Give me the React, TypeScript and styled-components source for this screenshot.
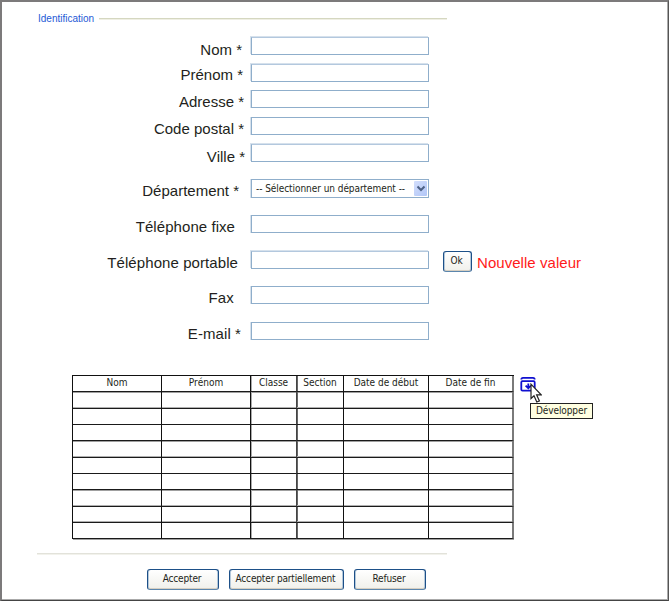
import React from "react";
import styled, { createGlobalStyle } from "styled-components";

const Global = createGlobalStyle`
  * { box-sizing: border-box; }
  body { margin: 0; background: #fff; }
`;

const small = `font-family: "DejaVu Sans Condensed", "DejaVu Sans", Tahoma, sans-serif; font-stretch: condensed;`;

const Page = styled.main`
  width: 669px;
  height: 601px;
  overflow: hidden;
  background: #fff;
  border-style: solid;
  border-width: 2px 1px 1px 2px;
  border-color: #7c7a7b #555 #444 #7c7a7b;
  box-shadow: inset -1px -1px 0 #aaa;
  padding-top: 10px;
  color: #231f20;
  font-family: "Liberation Sans", Arial, sans-serif;
  font-kerning: none;
`;

const Legend = styled.header`
  display: flex;
  align-items: center;
  width: 409px;
  height: 14px;
  margin-left: 36px;
  gap: 5px;
  color: #2459d6;
  font-size: 10px;
  line-height: 14px;
  white-space: nowrap;
  &::after {
    content: "";
    flex: 1;
    height: 2px;
    background: linear-gradient(#d5d7c0 50%, #efefe4 50%);
  }
`;

const Form = styled.form`
  display: flow-root;
  height: 349px;
`;

const Row = styled.div<{ $gap: number }>`
  display: grid;
  grid-template-columns: 249px 178px auto;
  height: 18px;
  margin-top: ${(p) => p.$gap}px;
`;

const Label = styled.label<{ $inset: number; $drop: number; $track?: number }>`
  justify-self: end;
  height: 18px;
  margin-top: ${(p) => p.$drop}px;
  padding-right: ${(p) => p.$inset}px;
  font-size: 15px;
  letter-spacing: ${(p) => p.$track || 0}px;
  line-height: 18px;
  white-space: nowrap;
`;

const Field = styled.input<{ $soft?: boolean }>`
  width: 178px;
  height: 18px;
  margin: 0;
  padding: 0 3px;
  outline: none;
  background: #fff;
  border: 1px solid #8faecb;
  border-top-color: ${(p) => (p.$soft ? "#b3c8de" : "#8faecb")};
  border-radius: 0;
  box-shadow: -1px ${(p) => (p.$soft ? "-1px" : "0")} 0 #d6e1ec;
`;

const Select = styled.div`
  display: flex;
  justify-content: space-between;
  width: 178px;
  height: 19px;
  padding: 1px 1px 1px 4px;
  border: 1px solid #8faecb;
  box-shadow: -1px 0 0 #d6e1ec;
  ${small}
  font-size: 10px;
  letter-spacing: -0.06px;
  line-height: 15px;
  white-space: nowrap;
`;

const Arrow = styled.span`
  display: grid;
  place-items: center;
  width: 13px;
  height: 15px;
  border-radius: 1px;
  background: linear-gradient(135deg, #d3defc, #b1c6f7);
`;

const Side = styled.div`
  display: flex;
  align-items: flex-start;
  height: 22px;
  margin-left: 14px;
  gap: 5px;
`;

const Button = styled.button<{ $w: number; $lift?: number }>`
  width: ${(p) => p.$w}px;
  height: 21px;
  padding: 0 2px ${(p) => p.$lift || 0}px 0;
  border: 1px solid #1d5088;
  border-bottom-color: #5b86ad;
  border-radius: 3px;
  box-shadow: inset 0 -1px 0 #d6cfc2, inset 1px 0 0 #b4c8da, inset -1px 0 0 #b4c8da;
  background: linear-gradient(#fff, #f0f0eb);
  color: #231f20;
  ${small}
  font-size: 10px;
  letter-spacing: -0.15px;
  line-height: 16px;
  white-space: nowrap;
`;

const Notice = styled.span`
  margin-top: 3px;
  color: #ff1a1a;
  font-size: 15px;
  letter-spacing: 0.05px;
  line-height: 18px;
  white-space: nowrap;
`;

const Results = styled.section`
  display: flex;
  align-items: flex-start;
  height: 165px;
  margin-left: 70px;
`;

const Table = styled.div`
  display: grid;
  grid-template-columns: 89px 89px 46px 47px 85px 85px;
  grid-template-rows: 16px 17px 16px 16px 17px 16px 16px 17px 16px 16px;
  border-top: 1px solid #111;
  border-left: 1px solid #111;
`;

const Cell = styled.div<{ $edge?: string }>`
  border-right: 1px solid #111;
  border-bottom: 1px solid #1a1a1a;
  box-shadow: ${(p) => p.$edge || "none"};
  &:nth-child(6n + 3) { border-right-color: #444; }
  &:nth-child(6n) { border-right: 2px solid #7a7a7a; }
  ${small}
  font-size: 10px;
  line-height: 14px;
  text-align: center;
  white-space: nowrap;
`;

const Expand = styled.div`
  position: relative;
  width: 16px;
  height: 16px;
  margin: 1px 0 0 6px;
`;

const Cursor = styled.svg`
  position: absolute;
  left: 10px;
  top: 7px;
  z-index: 2;
`;

const Tooltip = styled.div`
  position: absolute;
  left: 10px;
  top: 27px;
  width: 63px;
  height: 16px;
  border: 1px solid #222;
  background: #ffffe1;
  ${small}
  font-size: 10px;
  letter-spacing: -0.1px;
  line-height: 14px;
  text-align: center;
`;

const Rule = styled.hr`
  width: 410px;
  height: 2px;
  margin: 13px 0 0 35px;
  border: 0;
  background: linear-gradient(#e2e2da 50%, #f2f2ec 50%);
`;

const Actions = styled.footer`
  display: flex;
  margin: 14px 0 0 145px;
  gap: 10px;
`;

type RowSpec = {
  label: string;
  gap: number;
  inset: number;
  drop: number;
  track?: number;
  soft?: boolean;
  kind?: "select" | "phone";
};

const rows: RowSpec[] = [
  { label: "Nom *", gap: 11, inset: 9, drop: 4, soft: true },
  { label: "Prénom *", gap: 9, inset: 8, drop: 2, soft: true },
  { label: "Adresse *", gap: 8, inset: 7, drop: 3 },
  { label: "Code postal *", gap: 9, inset: 7, drop: 3 },
  { label: "Ville *", gap: 9, inset: 6, drop: 4, soft: true },
  { label: "Département *", gap: 17, inset: 12, drop: 3, kind: "select" },
  { label: "Téléphone fixe", gap: 18, inset: 16, drop: 3, track: 0.06 },
  { label: "Téléphone portable", gap: 18, inset: 13, drop: 3, track: 0.08, soft: true, kind: "phone" },
  { label: "Fax", gap: 17, inset: 17, drop: 3, track: 0.2 },
  { label: "E-mail *", gap: 18, inset: 10, drop: 3, track: 0.08 },
];

const headers = ["Nom", "Prénom", "Classe", "Section", "Date de début", "Date de fin"];

const below = "0 1px 0 #a0a0a0";
const above = "inset 0 -1px 0 #b0b0b0";
const rowEdges = [below, above, "", below, above, "", below, above, above, below];
const columnEdges = ["", "1px 0 0 #aaa", "1px 0 0 #666", "", "", ""];

const edge = (row: number, col: number) =>
  [columnEdges[col], rowEdges[row]].filter(Boolean).join(", ");

export default function App() {
  return (
    <>
      <Global />
      <Page>
        <Legend>Identification</Legend>
        <Form>
          {rows.map((r) => (
            <Row key={r.label} $gap={r.gap}>
              <Label $inset={r.inset} $drop={r.drop} $track={r.track}>{r.label}</Label>
              {r.kind === "select" ? (
                <Select>
                  -- Sélectionner un département --
                  <Arrow>
                    <svg width="10" height="7" viewBox="0 0 10 7"><path d="M1.500 1.500L5 5l3.500-3.500" fill="none" stroke="#4d6185" strokeWidth="2" /></svg>
                  </Arrow>
                </Select>
              ) : (
                <Field $soft={r.soft} />
              )}
              {r.kind === "phone" && (
                <Side>
                  <Button type="button" $w={29} $lift={2}>Ok</Button>
                  <Notice>Nouvelle valeur</Notice>
                </Side>
              )}
            </Row>
          ))}
        </Form>
        <Results>
          <Table>
            {rowEdges.map((_, row) =>
              headers.map((h, col) => (
                <Cell key={`${row}-${h}`} $edge={edge(row, col)}>{row === 0 ? h : null}</Cell>
              )),
            )}
          </Table>
          <Expand>
            <svg width="16" height="16" viewBox="0 0 16 16" fill="none" stroke="#1010d0" strokeWidth="1.800" display="block">
              <path d="M1.300 3.500Q1.300 1.900 3 1.900H13Q14.700 1.900 14.700 3.500M2.300 5.200H13.700Q14.700 5.200 14.700 6.500V13.500Q14.700 14.700 13.500 14.700H2.500Q1.300 14.700 1.300 13.500V6.500Q1.300 5.200 2.300 5.200M8.300 7.500V12M5.600 9.700L8.300 12.200L11 9.700" />
            </svg>
            <Cursor width="12" height="20" viewBox="0 0 12 20">
              <path d="M1 1.200v14.300l3-2.800 2.800 6.300 2.600-1-2.800-6.200H11.200z" fill="#fff" stroke="#222" strokeWidth="1.200" />
            </Cursor>
            <Tooltip>Développer</Tooltip>
          </Expand>
        </Results>
        <Rule />
        <Actions>
          <Button $w={72} $lift={1}>Accepter</Button>
          <Button $w={115} $lift={1}>Accepter partiellement</Button>
          <Button $w={72} $lift={1}>Refuser</Button>
        </Actions>
      </Page>
    </>
  );
}
